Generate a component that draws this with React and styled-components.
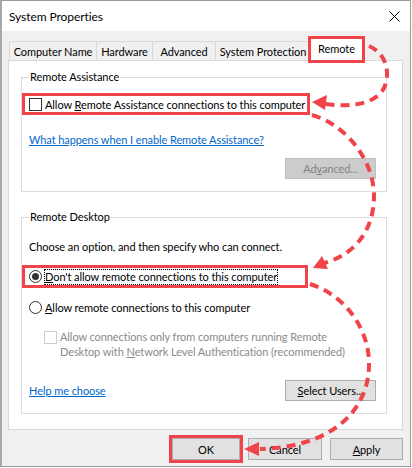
import React from 'react';
import styled, { createGlobalStyle } from 'styled-components';

const GlobalStyle = createGlobalStyle`
  html, body {
    margin: 0;
    padding: 0;
    background: #fff;
  }
  body {
    font-family: Lato, "Noto Sans", sans-serif;
    font-size: 11px;
    letter-spacing: -0.08px;
    color: #000;
  }
`;

const RED = '#f0434a';

const Window = styled.div`
  position: relative;
  width: 411px;
  height: 467px;
  box-sizing: border-box;
  border: 1px solid #9a9a9a;
  border-left: 2px solid #a8a8a8;
  display: flex;
  flex-direction: column;
  background: #f0f0f0;
`;

const TitleBar = styled.div`
  height: 30px;
  flex: none;
  background: #fff;
  display: flex;
  align-items: center;
  justify-content: space-between;
  padding: 0 10px 0 7px;
  font-size: 12px;
`;

const Body = styled.div`
  flex: 1;
  display: flex;
  flex-direction: column;
  padding: 7px 7px 0 6px;
`;

const Tabs = styled.div`
  display: flex;
  align-items: flex-end;
  padding-left: 2px;
  height: 23px;
  margin-bottom: -1px;
  position: relative;
  z-index: 1;
`;

const Tab = styled.div`
  width: ${(p) => p.$w}px;
  height: ${(p) => (p.$active ? 23 : 20)}px;
  box-sizing: border-box;
  border: 1px solid #d9d9d9;
  border-bottom: ${(p) => (p.$active ? 'none' : '1px solid #d9d9d9')};
  margin-left: -1px;
  background: ${(p) => (p.$active ? '#fff' : '#f0f0f0')};
  display: flex;
  align-items: center;
  justify-content: center;
  padding-bottom: ${(p) => (p.$active ? 3 : 0)}px;
  white-space: nowrap;
  position: relative;
  outline: ${(p) => (p.$marked ? `3px solid ${RED}` : 'none')};
  outline-offset: -1px;
`;

const Panel = styled.div`
  height: 370px;
  box-sizing: border-box;
  background: #fff;
  border: 1px solid #d9d9d9;
  padding: 8px 15px 0 12px;
  display: flex;
  flex-direction: column;
  gap: 17px;
`;

const Group = styled.fieldset`
  margin: 0;
  border: 1px solid #dcdcdc;
  padding: 0 10px 12px 7px;
  display: flex;
  flex-direction: column;
  min-width: 0;
`;

const Legend = styled.legend`
  padding: 0 1px;
  line-height: 16px;
`;

const Row = styled.div`
  display: flex;
  align-items: center;
  gap: 3px;
  height: ${(p) => p.$h || 20}px;
  margin-top: ${(p) => p.$mt || 0}px;
  white-space: nowrap;
`;

const Marked = styled(Row)`
  align-self: flex-start;
  box-sizing: border-box;
  width: ${(p) => p.$w}px;
  margin-left: -4px;
  padding: 0 4px;
  outline: 3px solid ${RED};
`;

const Box = styled.span`
  width: 13px;
  height: 13px;
  box-sizing: border-box;
  border: 1px solid ${(p) => (p.$disabled ? '#cccccc' : '#333')};
  background: #fff;
  flex: none;
`;

const Radio = styled.span`
  width: 13px;
  height: 13px;
  box-sizing: border-box;
  border: 1px solid #333;
  border-radius: 50%;
  background: #fff;
  flex: none;
  display: flex;
  align-items: center;
  justify-content: center;
  &::after {
    content: '';
    display: ${(p) => (p.$checked ? 'block' : 'none')};
    width: 7px;
    height: 7px;
    border-radius: 50%;
    background: #333;
  }
`;

const Focus = styled.span`
  outline: 1px dotted #000;
  line-height: 14px;
`;

const Link = styled.a`
  color: #0066cc;
  text-decoration: underline;
  cursor: pointer;
`;

const Button = styled.button`
  font: inherit;
  letter-spacing: inherit;
  color: ${(p) => (p.$disabled ? '#838383' : '#000')};
  width: ${(p) => p.$w || 91}px;
  height: ${(p) => p.$h || 21}px;
  box-sizing: border-box;
  background: ${(p) => (p.$disabled ? '#cccccc' : '#e1e1e1')};
  border: 1px solid ${(p) => (p.$disabled ? '#bfbfbf' : '#adadad')};
  padding: 0;
  flex: none;
  outline: ${(p) => (p.$marked ? `3px solid ${RED}` : 'none')};
  outline-offset: 0;
`;

const RightRow = styled.div`
  display: flex;
  justify-content: flex-end;
  margin-top: ${(p) => p.$mt || 0}px;
`;

const Note = styled.div`
  display: flex;
  gap: 3px;
  margin-top: 13px;
  padding-left: 15px;
  color: #8a8a8a;
  line-height: 14.5px;
  white-space: nowrap;
  & > span:first-child {
    margin-top: 1px;
  }
`;

const FootRow = styled.div`
  display: flex;
  align-items: center;
  justify-content: space-between;
  margin-top: 21px;
`;

const Buttons = styled.div`
  display: flex;
  justify-content: flex-end;
  gap: 8px;
  padding: 8px 0 0 0;
  & > button {
    height: 22px;
  }
`;

const Overlay = styled.svg`
  position: absolute;
  left: 0;
  top: 0;
  pointer-events: none;
`;

const CloseIcon = () => (
  <svg width="11" height="11" viewBox="0 0 11 11">
    <path d="M0.5 0.5 L10.5 10.5 M10.5 0.5 L0.5 10.5" stroke="#000" strokeWidth="1" />
  </svg>
);

const Arrows = () => (
  <Overlay width="412" height="468" viewBox="0 0 412 468">
    <g fill="none" stroke={RED} strokeWidth="4" strokeDasharray="9 6">
      <path d="M367 45 C384 52 389 72 382 87 C374 102 352 107 323 103" />
      <path d="M310 114 C345 124 372 160 372 195 C372 230 352 254 322 262" />
      <path d="M308 283 C345 295 368 330 367 365 C366 410 330 446 258 448" />
    </g>
    <g fill={RED}>
      <polygon points="310,101 325,94 323,109" />
      <polygon points="311,267 326,268 320,255" />
      <polygon points="242,448 257,441 257,455" />
    </g>
  </Overlay>
);

export default function App() {
  return (
    <>
      <GlobalStyle />
      <Window>
        <TitleBar>
          <span>System Properties</span>
          <CloseIcon />
        </TitleBar>
        <Body>
          <Tabs>
            <Tab $w={88}>Computer Name</Tab>
            <Tab $w={57}>Hardware</Tab>
            <Tab $w={64}>Advanced</Tab>
            <Tab $w={96}>System Protection</Tab>
            <Tab $w={53} $active $marked>Remote</Tab>
          </Tabs>
          <Panel>
            <Group>
              <Legend>Remote Assistance</Legend>
              <Marked $w={282} $h={16} $mt={11}>
                <Box />
                <span>Allow <u>R</u>emote Assistance connections to this computer</span>
              </Marked>
              <Row $mt={17}>
                <Link>What happens when I enable Remote Assistance?</Link>
              </Row>
              <RightRow $mt={9}>
                <Button $disabled>Ad<u>v</u>anced...</Button>
              </RightRow>
            </Group>
            <Group>
              <Legend>Remote Desktop</Legend>
              <Row $mt={11}>Choose an option, and then specify who can connect.</Row>
              <Marked $w={280} $h={17} $mt={12}>
                <Radio $checked />
                <Focus><u>D</u>on't allow remote connections to this computer</Focus>
              </Marked>
              <Row $mt={12}>
                <Radio />
                <span><u>A</u>llow remote connections to this computer</span>
              </Row>
              <Note>
                <Box $disabled />
                <span>
                  Allow connections only from computers running Remote
                  <br />
                  Desktop with <u>N</u>etwork Level Authentication (recommended)
                </span>
              </Note>
              <FootRow>
                <Link>Help me choose</Link>
                <Button><u>S</u>elect Users...</Button>
              </FootRow>
            </Group>
          </Panel>
          <Buttons>
            <Button $w={68} $marked>OK</Button>
            <Button $w={74}>Cancel</Button>
            <Button $w={73}><u>A</u>pply</Button>
          </Buttons>
        </Body>
        <Arrows />
      </Window>
    </>
  );
}
